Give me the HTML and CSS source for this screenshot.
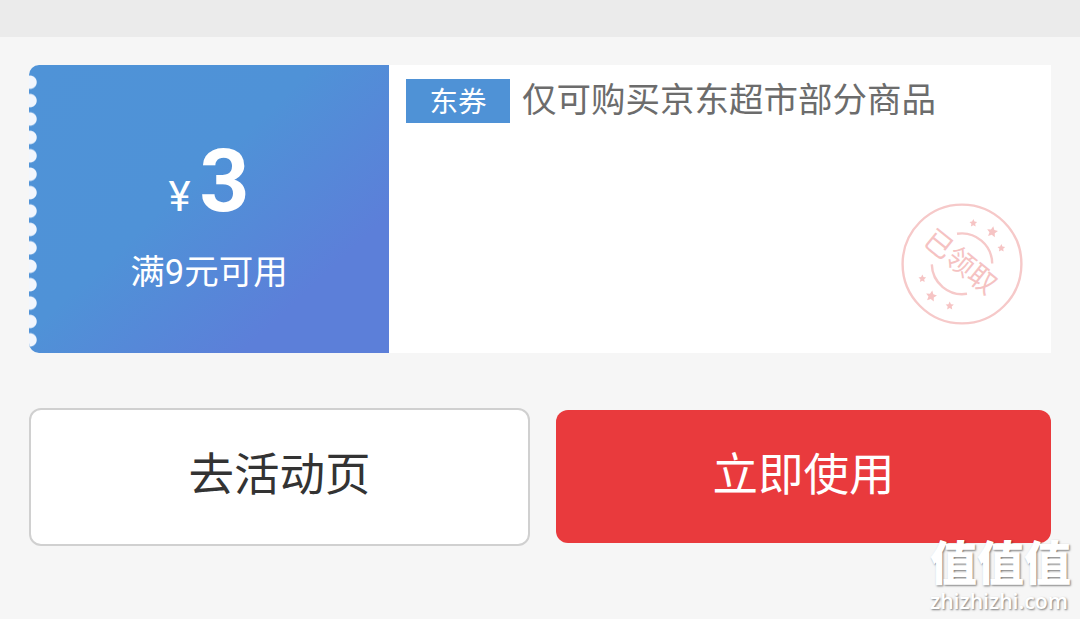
FILE: index.html
```html
<!DOCTYPE html>
<html lang="zh-CN">

<head>
    <meta charset="UTF-8">
    <meta name="viewport" content="width=device-width, initial-scale=1.0">
    <title>优惠券</title>
    <link rel="stylesheet" href="styles.css">
</head>

<body>
    <div class="top-bar"></div>

    <div class="main">
        <div class="coupon">
            <div class="coupon-left">
                <div class="notches"></div>
                <div class="price">
                    <span class="price-unit">¥</span>
                    <span class="price-num">3</span>
                </div>
                <p class="price-limit">满9元可用</p>
            </div>
            <div class="coupon-right">
                <span class="tag">东券</span>
                <p class="coupon-title">仅可购买京东超市部分商品</p>
                <svg class="stamp" viewBox="-63 -63 126 126">
                    <defs>
                        <path id="star" d="M0 -5.6 L1.7 -2 L5.5 -1.6 L2.7 1.1 L3.4 5 L0 3.1 L-3.4 5 L-2.7 1.1 L-5.5 -1.6 L-1.7 -2 Z" />
                    </defs>
                    <circle class="stamp-line" cx="0" cy="0" r="59.4" />
                    <path class="stamp-line" d="M-5 -30.2 A30.5 30.5 0 0 1 30.2 -0.4" />
                    <path class="stamp-line" d="M-30.2 0.4 A30.5 30.5 0 0 0 5 29.8" />
                    <use class="stamp-star" href="#star" transform="translate(11.3 -41) scale(.7)" />
                    <use class="stamp-star" href="#star" transform="translate(30.3 -32.3) rotate(10)" />
                    <use class="stamp-star" href="#star" transform="translate(39.3 -16) scale(.7)" />
                    <use class="stamp-star" href="#star" transform="translate(-39.7 14.5) scale(.7)" />
                    <use class="stamp-star" href="#star" transform="translate(-30.7 32) rotate(10)" />
                    <use class="stamp-star" href="#star" transform="translate(-12.3 41.7) scale(.75)" />
                    <text class="stamp-text" x="-2.5" y="9" transform="rotate(39)">已领取</text>
                </svg>
            </div>
        </div>

        <div class="main-btn">
            <button class="btn btn-page">去活动页</button>
            <button class="btn btn-use">立即使用</button>
        </div>
    </div>

    <div class="watermark">
        <p class="watermark-name">值值值</p>
        <p class="watermark-url">zhizhizhi.com</p>
    </div>
</body>

</html>
```
FILE: styles.css
```css
* {
    margin: 0;
    padding: 0;
    box-sizing: border-box;
    font-family: Roboto, "Noto Sans CJK SC", sans-serif;
}

body {
    height: 619px;
    background-color: #f6f6f6;
    overflow: hidden;
}

.top-bar {
    height: 37px;
    background-color: #ebebeb;
}

.main {
    padding: 28px 29px 0;
}

.coupon {
    display: flex;
    height: 288px;
    border-radius: 10px 0 0 10px;
    background-color: #fff;
    overflow: hidden;
}

.coupon-left {
    position: relative;
    width: 360px;
    padding-top: 73px;
    background: linear-gradient(137deg, #4f93d7 0%, #4f92d7 43%, #5c7fd9 78%, #5c7fd9 100%);
    color: #fff;
}

/* saw edge of the ticket */
.notches {
    position: absolute;
    left: 0;
    top: 7.5px;
    width: 9px;
    height: 276px;
    background: radial-gradient(circle at 1px 50%, #f2f6fd 6.2px, transparent 7.2px) 0 0 / 9px 18.42px repeat-y;
}

.price {
    display: flex;
    align-items: baseline;
    justify-content: center;
    gap: 9px;
    height: 86px;
    line-height: 86px;
}

.price-unit {
    font-size: 42px;
}

.price-num {
    font-size: 87px;
    font-weight: bold;
}

.price-limit {
    margin-top: 23px;
    line-height: 50px;
    font-size: 34.5px;
    text-align: center;
}

.coupon-right {
    position: relative;
    flex: 1;
    display: flex;
    align-items: flex-start;
    padding: 14px 17px;
}

.tag {
    width: 104px;
    height: 44px;
    line-height: 48px;
    background-color: #4f92d6;
    color: #fff;
    font-size: 28.5px;
    text-align: center;
}

.coupon-title {
    margin-left: 12px;
    line-height: 42px;
    font-size: 34.5px;
    color: #6c6c6c;
    white-space: nowrap;
}

.stamp {
    position: absolute;
    right: 26px;
    bottom: 26px;
    width: 126px;
    height: 126px;
}

.stamp-line {
    fill: none;
    stroke: #f6c9c9;
    stroke-width: 2.4;
}

.stamp-star {
    fill: #f6c4c4;
}

.stamp-text {
    font-size: 28px;
    fill: #f5c2c2;
    text-anchor: middle;
}

.main-btn {
    display: flex;
    align-items: flex-start;
    justify-content: space-between;
    margin-top: 55px;
}

.btn {
    border: none;
    border-radius: 12px;
    font-size: 45.5px;
    padding-bottom: 12px;
}

.btn-page {
    width: 501px;
    height: 138px;
    border: 2px solid #d0d0d0;
    background-color: #fff;
    color: #333;
}

.btn-use {
    width: 495px;
    height: 133px;
    margin-top: 2px;
    background-color: #e93a3d;
    color: #fff;
    padding-bottom: 11px;
}

.watermark {
    position: absolute;
    right: 8px;
    bottom: 5px;
    width: 142px;
    color: #fff;
    text-shadow: 1px 1px 2px rgba(0, 0, 0, 0.5);
}

.watermark-name {
    line-height: 48px;
    font-size: 47px;
    font-weight: 900;
    white-space: nowrap;
}

.watermark-url {
    line-height: 26px;
    font-family: "Open Sans", "Noto Sans", sans-serif;
    font-size: 21.2px;
    font-weight: 600;
}
```
